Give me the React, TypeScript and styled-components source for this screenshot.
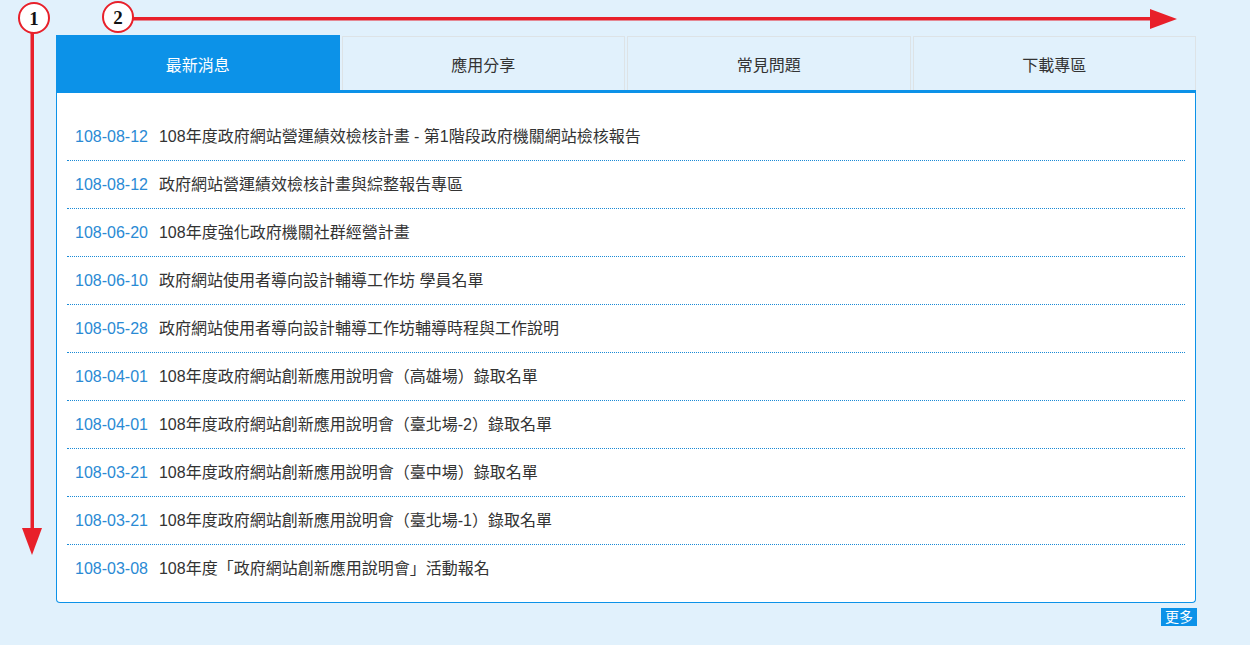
import React from "react";
import styled, { createGlobalStyle } from "styled-components";

const GlobalStyle = createGlobalStyle`
  html, body {
    margin: 0;
    padding: 0;
    background: #e1f1fc;
    font-family: "Liberation Sans", Arial, "Noto Sans CJK TC", sans-serif;
  }
`;

const Page = styled.div`
  position: relative;
  width: 1250px;
  height: 645px;
  box-sizing: border-box;
  padding: 35px 54px 0 56px;
`;

const Tabs = styled.ul`
  display: grid;
  grid-template-columns: repeat(4, 1fr);
  gap: 2px;
  margin: 0;
  padding: 0;
  list-style: none;
  height: 55px;
  border-bottom: 3px solid #0c92e8;
`;

const Tab = styled.li<{ $active?: boolean }>`
  display: flex;
  align-items: center;
  justify-content: center;
  box-sizing: border-box;
  margin-top: ${(p) => (p.$active ? "0" : "1px")};
  border: 1px solid ${(p) => (p.$active ? "#0c92e8" : "#dde3e6")};
  border-bottom: none;
  background: ${(p) => (p.$active ? "#0c92e8" : "#e1f1fc")};
  color: ${(p) => (p.$active ? "#ffffff" : "#333333")};
  font-size: 16px;
  padding-top: 1px;
  cursor: pointer;
`;

const Panel = styled.div`
  background: #ffffff;
  border: 1px solid #0c92e8;
  border-top: none;
  border-radius: 0 0 4px 4px;
  padding: 20px 10px 10px;
`;

const List = styled.ul`
  margin: 0;
  padding: 0;
  list-style: none;
`;

const Item = styled.li`
  height: 47px;
  line-height: 47px;
  padding-left: 8px;
  font-size: 16px;
  white-space: nowrap;
  border-bottom: 1px dotted #1a8ad6;

  &:last-child {
    border-bottom: none;
  }
`;

const Date = styled.span`
  color: #2a8ad4;
  margin-right: 11px;
`;

const Title = styled.a`
  color: #333333;
  text-decoration: none;
`;

const Footer = styled.div`
  display: flex;
  justify-content: flex-end;
  padding-top: 5px;
`;

const More = styled.a`
  background: #0c92e8;
  color: #ffffff;
  font-size: 14px;
  line-height: 18px;
  padding: 0 4px;
  margin-right: -1px;
  text-decoration: none;
`;

const Overlay = styled.svg`
  position: absolute;
  left: 0;
  top: 0;
  pointer-events: none;
`;

const tabs = ["最新消息", "應用分享", "常見問題", "下載專區"];

const news = [
  ["108-08-12", "108年度政府網站營運績效檢核計畫 - 第1階段政府機關網站檢核報告"],
  ["108-08-12", "政府網站營運績效檢核計畫與綜整報告專區"],
  ["108-06-20", "108年度強化政府機關社群經營計畫"],
  ["108-06-10", "政府網站使用者導向設計輔導工作坊 學員名單"],
  ["108-05-28", "政府網站使用者導向設計輔導工作坊輔導時程與工作說明"],
  ["108-04-01", "108年度政府網站創新應用說明會（高雄場）錄取名單"],
  ["108-04-01", "108年度政府網站創新應用說明會（臺北場-2）錄取名單"],
  ["108-03-21", "108年度政府網站創新應用說明會（臺中場）錄取名單"],
  ["108-03-21", "108年度政府網站創新應用說明會（臺北場-1）錄取名單"],
  ["108-03-08", "108年度「政府網站創新應用說明會」活動報名"],
];

const App = () => {
  return (
    <>
      <GlobalStyle />
      <Page>
        <Tabs>
          {tabs.map((t, i) => (
            <Tab key={t} $active={i === 0}>
              {t}
            </Tab>
          ))}
        </Tabs>
        <Panel>
          <List>
            {news.map(([d, t], i) => (
              <Item key={i}>
                <Date>{d}</Date>
                <Title href="#">{t}</Title>
              </Item>
            ))}
          </List>
        </Panel>
        <Footer>
          <More href="#">更多</More>
        </Footer>

        {/* annotation marks */}
        <Overlay width="1250" height="645" viewBox="0 0 1250 645">
          <g fill="none" stroke="#e8202a" strokeWidth="2">
            <circle cx="34" cy="18" r="15" fill="#ffffff" />
            <circle cx="118" cy="17" r="15" fill="#ffffff" />
          </g>
          <text
            x="34"
            y="25"
            textAnchor="middle"
            fontFamily="Liberation Serif, serif"
            fontWeight="bold"
            fontSize="19"
            fill="#111"
          >
            1
          </text>
          <text
            x="118"
            y="24"
            textAnchor="middle"
            fontFamily="Liberation Serif, serif"
            fontWeight="bold"
            fontSize="19"
            fill="#111"
          >
            2
          </text>
          <rect x="30.5" y="33" width="3.5" height="500" fill="#e8202a" />
          <polygon points="22,528 42,528 32,555" fill="#e8202a" />
          <rect x="133" y="17" width="1020" height="3.5" fill="#e8202a" />
          <polygon points="1150,9 1150,29 1177,19" fill="#e8202a" />
        </Overlay>
      </Page>
    </>
  );
};

export default App;
